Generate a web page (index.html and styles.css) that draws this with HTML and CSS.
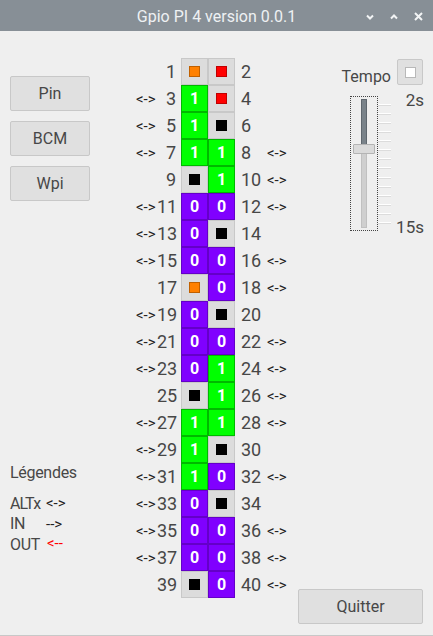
FILE: index.html
```html
<!DOCTYPE html>
<html lang="fr">
<head>
<meta charset="utf-8">
<title>Gpio PI 4 version 0.0.1</title>
<link rel="stylesheet" href="styles.css">
</head>
<body>
<div class="window">
  <div class="titlebar">
    <div></div>
    <div class="title">Gpio PI 4 version 0.0.1</div>
    <div class="controls">
      <svg width="8" height="8" viewBox="0 0 8 8"><path d="M1 2.5 L4 5.5 L7 2.5" fill="none" stroke="#f2f4f5" stroke-width="2"/></svg>
      <svg width="8" height="8" viewBox="0 0 8 8"><path d="M1 5.5 L4 2.5 L7 5.5" fill="none" stroke="#f2f4f5" stroke-width="2"/></svg>
      <svg width="9" height="9" viewBox="0 0 9 9"><path d="M1 1 L8 8 M8 1 L1 8" fill="none" stroke="#f2f4f5" stroke-width="2"/></svg>
    </div>
  </div>
  <div class="main">
    <div class="leftcol">
      <div class="btn side">Pin</div>
      <div class="btn side">BCM</div>
      <div class="btn side">Wpi</div>
      <div class="legend">
        <div class="legend-title">Légendes</div>
        <div class="legend-grid">
          <span class="tight">ALTx</span><span class="arr">&lt;-&gt;</span>
          <span>IN</span><span class="arr">--&gt;</span>
          <span>OUT</span><span class="arr red">&lt;--</span>
        </div>
      </div>
    </div>
    <div class="pins" id="pins"></div>
    <div class="rightcol">
      <div class="tempo-row">
        <span class="tempo">Tempo</span>
        <div class="check"><span class="check-in"></span></div>
      </div>
      <div class="slider-block">
        <div class="slider">
          <div class="groove-top"></div>
          <div class="handle"></div>
          <div class="groove-bottom"></div>
        </div>
        <div class="ticks">
          <i></i><i></i><i></i><i></i><i></i><i></i><i></i><i></i><i></i><i></i><i></i><i></i><i></i><i></i>
        </div>
        <div class="scale"><span>2s</span><span>15s</span></div>
      </div>
      <div class="btn quit">Quitter</div>
    </div>
  </div>
</div>
<script>
var rows = [
  [1,0,'o','r',2,0],[3,1,'1','r',4,0],[5,1,'1','k',6,0],[7,1,'1','1',8,1],
  [9,0,'k','1',10,1],[11,1,'0','0',12,1],[13,1,'0','k',14,0],[15,1,'0','0',16,1],
  [17,0,'o','0',18,1],[19,1,'0','k',20,0],[21,1,'0','0',22,1],[23,1,'0','1',24,1],
  [25,0,'k','1',26,1],[27,1,'1','1',28,1],[29,1,'1','k',30,0],[31,1,'1','0',32,1],
  [33,1,'0','k',34,0],[35,1,'0','0',36,1],[37,1,'0','0',38,1],[39,0,'k','0',40,1]
];
function cell(v){
  if(v==='1') return '<div class="cell on">1</div>';
  if(v==='0') return '<div class="cell off">0</div>';
  var c = v==='o'?'orange':(v==='r'?'red':'black');
  return '<div class="cell idle"><span class="sq '+c+'"></span></div>';
}
var h='';
rows.forEach(function(r){
  h+='<div class="row">'+
    '<span class="arrow">'+(r[1]?'&lt;-&gt;':'')+'</span>'+
    '<span class="num left">'+r[0]+'</span>'+
    cell(r[2])+cell(r[3])+
    '<span class="num right">'+r[4]+'</span>'+
    '<span class="arrow">'+(r[5]?'&lt;-&gt;':'')+'</span>'+
    '</div>';
});
document.getElementById('pins').innerHTML=h;
</script>
</body>
</html>
```
FILE: styles.css
```css
* { box-sizing: border-box; }
html, body { margin: 0; padding: 0; }
body {
  width: 433px;
  height: 636px;
  overflow: hidden;
  background: #efefef;
  font-family: Roboto, "Liberation Sans", sans-serif;
  color: #474747;
}
.window { width: 433px; height: 636px; display: flex; flex-direction: column; }
.titlebar {
  height: 31px;
  background: #878f96;
  display: grid;
  grid-template-columns: 1fr auto 1fr;
  align-items: center;
}
.title {
  color: #eef1f3;
  font-size: 16px;
  padding-top: 1px;
}
.controls {
  justify-self: end;
  display: flex;
  align-items: center;
  gap: 16px;
  padding-right: 10px;
  padding-top: 2px;
}
.controls svg { display: block; }
.main {
  height: 605px;
  border-bottom: 1px solid #c8c8c8;
  display: flex;
  padding: 0 10px;
}
.leftcol {
  width: 80px;
  padding-top: 45px;
  display: flex;
  flex-direction: column;
  gap: 10px;
}
.btn {
  background: #e0e0e0;
  border: 1px solid #c8c8c8;
  border-radius: 2px;
  height: 35px;
  display: flex;
  align-items: center;
  justify-content: center;
  font-size: 16px;
  color: #474747;
}
.legend { margin-top: 252px; font-size: 16px; letter-spacing: -0.3px; color: #474747; }
.legend-title { line-height: 20px; }
.legend-grid {
  margin-top: 10px;
  display: grid;
  grid-template-columns: 36px auto;
  grid-auto-rows: 20.5px;
  align-items: center;
}
.legend-grid .tight { letter-spacing: -0.9px; }
.legend-grid .arr { font-size: 15px; letter-spacing: 0; color: #222; }
.legend-grid .arr.red { color: #ff0000; align-self: start; padding-left: 1px; }
.pins {
  margin-left: 46px;
  padding-top: 27px;
  width: 152px;
  display: flex;
  flex-direction: column;
}
.row {
  height: 27px;
  display: grid;
  grid-template-columns: 21px 24px 27px 27px 32px 21px;
  align-items: center;
}
.arrow { font-size: 15px; color: #222; white-space: nowrap; }
.num { font-size: 18px; color: #474747; }
.num.left { text-align: right; padding-right: 5px; }
.num.right { padding-left: 6px; }
.cell {
  width: 27px;
  height: 27px;
  border: 1px solid;
  display: flex;
  align-items: center;
  justify-content: center;
  color: #fff;
  font-weight: bold;
  font-size: 16px;
}
.cell.idle { background: #dcdcdc; border-color: #c8c8c8; }
.cell.on { background: #00ff00; border-color: #00b800; }
.cell.off { background: #8000ff; border-color: #6400c8; }
.sq { width: 11px; height: 11px; border: 1px solid; display: block; }
.sq.orange { background: #ff8000; border-color: #c06000; }
.sq.red { background: #ff0000; border-color: #c00000; }
.sq.black { background: #000; border-color: #000; }
.rightcol {
  margin-left: 10px;
  width: 125px;
  padding-top: 27px;
  padding-bottom: 11px;
  display: flex;
  flex-direction: column;
}
.tempo-row {
  display: flex;
  justify-content: flex-end;
  align-items: center;
  gap: 6px;
}
.tempo { font-size: 16px; color: #474747; padding-top: 9px; }
.check {
  width: 26px;
  height: 26px;
  background: #e0e0e0;
  border: 1px solid #c8c8c8;
  border-radius: 2px;
  display: flex;
  align-items: center;
  justify-content: center;
}
.check-in { width: 11px; height: 11px; background: #fff; border: 1px solid #b8b8b8; display: block; }
.slider-block {
  margin-top: 10px;
  display: flex;
  justify-content: flex-end;
  height: 135px;
}
.slider {
  width: 28px;
  height: 135px;
  border: 1px dotted #444;
  padding: 2px 0;
  display: flex;
  flex-direction: column;
  align-items: center;
}
.groove-top { width: 6px; height: 45px; background: #7a838a; border: 1px solid #5f676e; border-bottom: none; }
.handle { width: 22px; height: 10px; background: #dadada; border: 1px solid #b4b4b4; border-radius: 1px; }
.groove-bottom { width: 6px; flex: 1; background: #cfcfcf; border: 1px solid #c0c0c0; border-top: none; }
.ticks {
  width: 13px;
  display: flex;
  flex-direction: column;
  justify-content: space-between;
  padding: 8px 0 7px;
}
.ticks i { display: block; height: 2px; border-top: 1px solid #ffffff; border-bottom: 1px solid #dcdcdc; }
.scale {
  width: 33px;
  display: flex;
  flex-direction: column;
  justify-content: space-between;
  align-items: flex-end;
  font-size: 17px;
  color: #474747;
  margin-top: -6px;
  margin-bottom: -6px;
  margin-right: -1px;
}
.quit { margin-top: auto; }
```
